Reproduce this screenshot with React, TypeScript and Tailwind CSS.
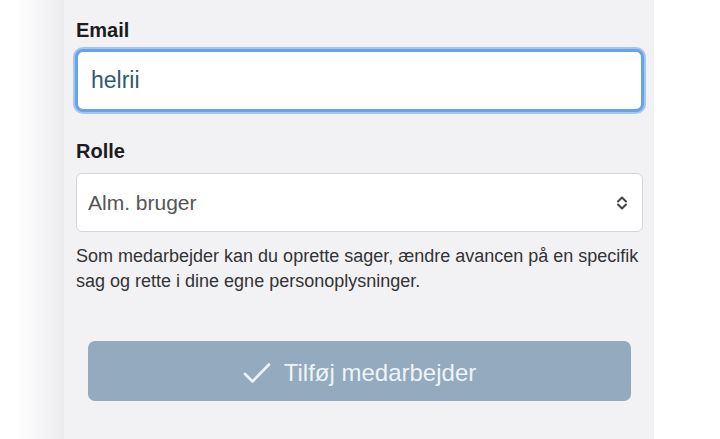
export default function App() {
  return (
    <div
      className="flex h-[439px] w-[720px] overflow-hidden bg-white"
      style={{ fontFamily: '"Liberation Sans", Arial, sans-serif' }}
    >
      <div className="w-[64px] shrink-0 bg-gradient-to-r from-white from-25% to-[#ececef]" />

      <div className="w-[590px] shrink-0 bg-[#f2f2f4] pl-3 pr-[11px] pt-[18px]">
        <label className="block text-[20px] font-bold leading-[24px] text-[#1c1c1e]">Email</label>
        <div className="-mx-px mt-[7px] flex h-[63px] items-center rounded-[8px] border-[3px] border-[#66a3e8] bg-white pl-[13px] shadow-[0_0_0_2px_rgba(102,163,232,0.55)]">
          <span className="text-[23px] text-[#2d5a76]">helrii</span>
        </div>

        <label className="mt-[27px] block text-[20px] font-bold leading-[24px] text-[#1c1c1e]">Rolle</label>
        <div className="mt-[10px] flex h-[59px] items-center justify-between rounded-[6px] border border-[#d6d6da] bg-white pl-[11px] pr-[14px]">
          <span className="text-[21px] text-[#555558]">Alm. bruger</span>
          <svg width="12" height="16" viewBox="0 0 12 16" fill="none" stroke="#444" strokeWidth="2" strokeLinecap="round" strokeLinejoin="round">
            <path d="M2 6.5 L6 2.5 L10 6.5" />
            <path d="M2 9.5 L6 13.5 L10 9.5" />
          </svg>
        </div>

        <p className="mt-3 text-[18px] leading-[25px] text-[#333336]">
          Som medarbejder kan du oprette sager, ændre avancen på en specifik sag og rette i dine egne personoplysninger.
        </p>

        <div className="mx-3 mt-[47px] flex h-[60px] items-center justify-center gap-[13px] rounded-[7px] bg-[#94aabf] pt-1 text-[#eef3f8]">
          <svg width="28" height="24" viewBox="0 0 28 24" fill="none" stroke="currentColor" strokeWidth="2.6" strokeLinecap="round" strokeLinejoin="round">
            <path d="M2 13 L9.5 20.5 L26 3.5" />
          </svg>
          <span className="text-[24px]">Tilføj medarbejder</span>
        </div>
      </div>

      <div className="flex-1 bg-white" />
    </div>
  )
}
